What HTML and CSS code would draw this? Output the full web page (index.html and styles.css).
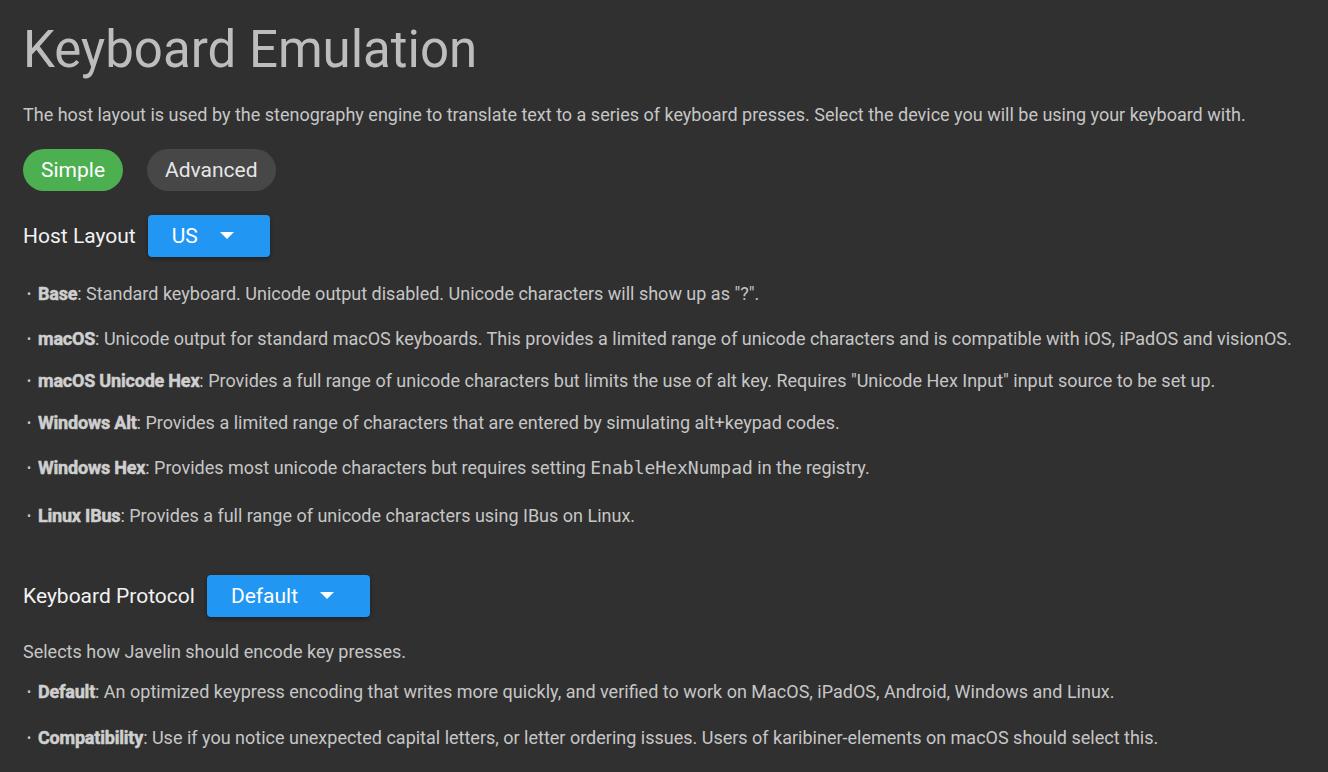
FILE: index.html
```html
<!DOCTYPE html>
<html>
<head>
<meta charset="utf-8">
<link rel="stylesheet" href="styles.css">
</head>
<body>
<main class="page">
  <h1 class="title">Keyboard Emulation</h1>
  <p class="intro">The host layout is used by the stenography engine to translate text to a series of keyboard presses. Select the device you will be using your keyboard with.</p>
  <div class="tabs">
    <button class="pill pill-active">Simple</button>
    <button class="pill">Advanced</button>
  </div>
  <div class="field">
    <span class="field-label">Host Layout</span>
    <button class="select">US <svg class="caret" width="14" height="8" viewBox="0 0 14 8"><path d="M0 0 L14 0 L7 7 Z" fill="#fff"/></svg></button>
  </div>
  <ul class="options options-host">
    <li class="opt"><b>Base</b>: Standard keyboard. Unicode output disabled. Unicode characters will show up as "?".</li>
    <li class="opt"><b>macOS</b>: Unicode output for standard macOS keyboards. This provides a limited range of unicode characters and is compatible with iOS, iPadOS and visionOS.</li>
    <li class="opt"><b>macOS Unicode Hex</b>: Provides a full range of unicode characters but limits the use of alt key. Requires "Unicode Hex Input" input source to be set up.</li>
    <li class="opt"><b>Windows Alt</b>: Provides a limited range of characters that are entered by simulating alt+keypad codes.</li>
    <li class="opt"><b>Windows Hex</b>: Provides most unicode characters but requires setting <code>EnableHexNumpad</code> in the registry.</li>
    <li class="opt"><b>Linux IBus</b>: Provides a full range of unicode characters using IBus on Linux.</li>
  </ul>
  <div class="field field-protocol">
    <span class="field-label">Keyboard Protocol</span>
    <button class="select">Default <svg class="caret" width="14" height="8" viewBox="0 0 14 8"><path d="M0 0 L14 0 L7 7 Z" fill="#fff"/></svg></button>
  </div>
  <p class="note">Selects how Javelin should encode key presses.</p>
  <ul class="options options-protocol">
    <li class="opt"><b>Default</b>: An optimized keypress encoding that writes more quickly, and verified to work on MacOS, iPadOS, Android, Windows and Linux.</li>
    <li class="opt"><b>Compatibility</b>: Use if you notice unexpected capital letters, or letter ordering issues. Users of karibiner-elements on macOS should select this.</li>
  </ul>
</main>
</body>
</html>
```

FILE: styles.css
```css
html, body {
  margin: 0;
  padding: 0;
  background: #303030;
}
body {
  font-family: Roboto, "Noto Sans", sans-serif;
  color: #c6c6c6;
  width: 1328px;
  height: 772px;
  overflow: hidden;
}
.page {
  padding: 18px 0 0 23px;
}
.title {
  margin: 0;
  font-size: 51px;
  font-weight: 400;
  line-height: 64px;
  color: #bdbdbd;
}
.intro {
  margin: 21px 0 0;
  font-size: 18px;
  line-height: 24px;
}
.tabs {
  display: flex;
  gap: 24px;
  margin-top: 22px;
}
.pill {
  border: none;
  border-radius: 21px;
  height: 42px;
  padding: 0 18px;
  font-family: Roboto, sans-serif;
  font-size: 21px;
  color: #e6e6e6;
  background: #474747;
}
.pill-active {
  background: #4caf50;
  color: #fff;
}
.field {
  display: flex;
  align-items: center;
  gap: 12px;
  margin-top: 24px;
}
.field-label {
  font-size: 21px;
  color: #f2f2f2;
}
.select {
  display: flex;
  align-items: center;
  gap: 22px;
  height: 42px;
  padding: 0 36px 0 24px;
  border: none;
  border-radius: 4px;
  background: #2196f3;
  color: #fff;
  font-family: Roboto, sans-serif;
  font-size: 21px;
  box-shadow: 0 2px 4px rgba(0,0,0,0.35);
}
.caret { display: block; }
.options {
  list-style: none;
  margin: 25px 0 0 4px;
  padding: 0;
}
.opt {
  font-size: 18px;
  line-height: 24px;
  margin-top: 18px;
}
.opt:first-child { margin-top: 0; }
.options-host .opt:nth-child(2) { margin-top: 21px; }
.options-host .opt:nth-child(5) { margin-top: 21px; }
.options-host .opt:nth-child(6) { margin-top: 24px; }
.opt::before {
  content: "\2022";
  display: inline-block;
  width: 11px;
  font-size: 12px;
  vertical-align: 2px;
}
.opt b {
  color: #cfcfcf;
  font-weight: 700;
  letter-spacing: -0.2px;
  -webkit-text-stroke: 0.5px currentColor;
}
.opt code {
  font-family: "DejaVu Sans Mono", monospace;
  font-size: 18px;
  line-height: 1;
  color: #c6c6c6;
}
.field-protocol { margin-top: 47px; }
.note {
  margin: 23px 0 0;
  font-size: 18px;
  line-height: 24px;
}
.options-protocol { margin-top: 16px; }
.options-protocol .opt:nth-child(2) { margin-top: 22px; }
```
